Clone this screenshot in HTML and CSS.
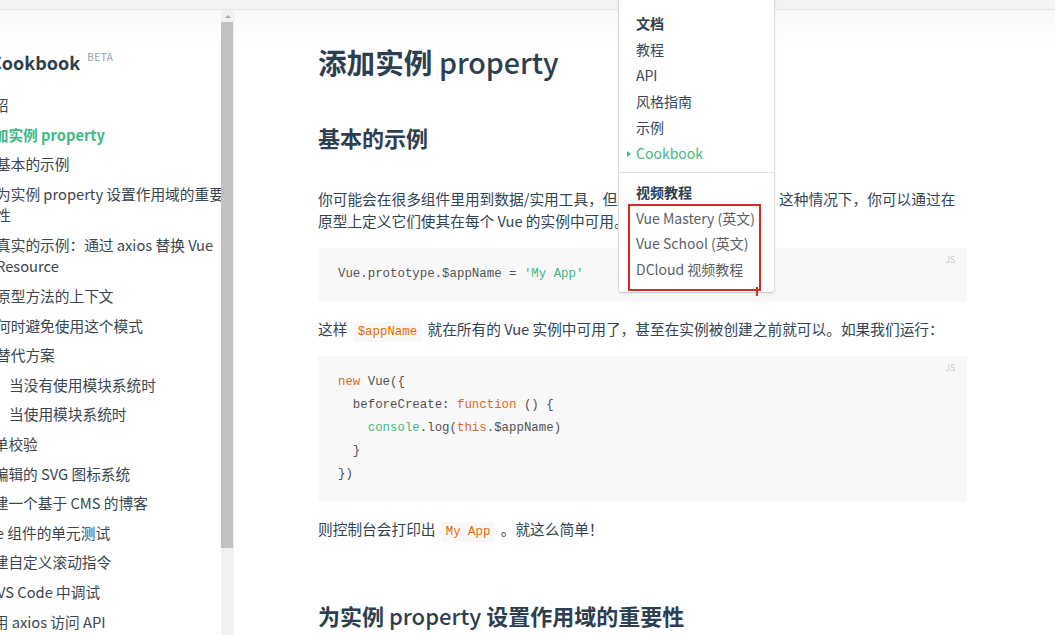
FILE: index.html
```html
<!DOCTYPE html>
<html lang="zh-CN">
<head>
<meta charset="utf-8">
<title>添加实例 property — Vue.js</title>
<link rel="stylesheet" href="styles.css">
</head>
<body>
<div class="topbar"></div>
<div class="layout">
  <aside class="sidebar">
    <div class="sidebar-inner">
      <h2 class="sb-title">Cookbook<sup class="beta">BETA</sup></h2>
      <ul class="menu">
        <li class="l0">介绍</li>
        <li class="l0 current">添加实例 property</li>
        <li class="l1">基本的示例</li>
        <li class="l1">为实例 property 设置作用域的重要性</li>
        <li class="l1">真实的示例：通过 axios 替换 Vue Resource</li>
        <li class="l1">原型方法的上下文</li>
        <li class="l1">何时避免使用这个模式</li>
        <li class="l1">替代方案</li>
        <li class="l2">当没有使用模块系统时</li>
        <li class="l2">当使用模块系统时</li>
        <li class="l0">表单校验</li>
        <li class="l0">可编辑的 SVG 图标系统</li>
        <li class="l0">创建一个基于 CMS 的博客</li>
        <li class="l0">Vue 组件的单元测试</li>
        <li class="l0">创建自定义滚动指令</li>
        <li class="l0">在 VS Code 中调试</li>
        <li class="l0">使用 axios 访问 API</li>
      </ul>
    </div>
  </aside>
  <div class="scrollbar">
    <span class="sb-arrow"></span>
    <span class="sb-thumb"></span>
  </div>
  <main class="main">
    <div class="content">
      <h1 class="title">添加实例 <span class="latin">property</span></h1>
      <h2 class="h2 first">基本的示例</h2>
      <p class="para p1">你可能会在很多组件里用到数据/实用工具，但是不想污染全局作用域。这种情况下，你可以通过在原型上定义它们使其在每个 Vue 的实例中可用。</p>
      <pre class="code c1"><code>Vue.prototype.$appName = <span class="str">'My App'</span></code></pre>
      <p class="para p2">这样 <code class="ic">$appName</code> 就在所有的 Vue 实例中可用了，甚至在实例被创建之前就可以。如果我们运行：</p>
      <pre class="code c2"><code><span class="kw">new</span> Vue({
  beforeCreate: <span class="kw">function</span> () {
    <span class="bi">console</span>.log(<span class="kw">this</span>.$appName)
  }
})</code></pre>
      <p class="para p3">则控制台会打印出 <code class="ic">My App</code> 。就这么简单！</p>
      <h2 class="h2 second">为实例 <span class="latin">property</span> 设置作用域的重要性</h2>
    </div>
  </main>
</div>

<div class="dropdown">
  <ul class="dd-list">
    <li class="dd-head">文档</li>
    <li class="dd-item">教程</li>
    <li class="dd-item">API</li>
    <li class="dd-item">风格指南</li>
    <li class="dd-item">示例</li>
    <li class="dd-item active">Cookbook</li>
  </ul>
  <ul class="dd-list dd-video">
    <li class="dd-head">视频教程</li>
    <li class="dd-item muted">Vue Mastery (英文)</li>
    <li class="dd-item muted">Vue School (英文)</li>
    <li class="dd-item muted">DCloud 视频教程</li>
  </ul>
</div>
<div class="annot-box"></div>
<div class="annot-tick"></div>
</body>
</html>
```

FILE: styles.css
```css
* { box-sizing: border-box; }

html, body {
  margin: 0;
  padding: 0;
}

body {
  width: 1055px;
  height: 635px;
  overflow: hidden;
  position: relative;
  background: #fff;
  color: #304455;
  font-family: "Noto Sans CJK SC", "Noto Sans", sans-serif;
}

.topbar {
  height: 10px;
  background: #f3f3f3;
  border-bottom: 1px solid #e6e6e6;
}

.layout {
  display: flex;
  height: 625px;
}

/* ---------- sidebar ---------- */
.sidebar {
  width: 221px;
  flex: none;
  overflow: hidden;
  background: linear-gradient(#f8f8f8, #fff 36px);
}

.sidebar-inner {
  margin-left: -21px;
  width: 249px;
}

.sb-title {
  margin: 37px 0 0 11px;
  font-size: 18px;
  line-height: 30px;
  font-weight: 600;
  color: #2c3e50;
  white-space: nowrap;
}

.beta {
  display: inline-block;
  vertical-align: top;
  margin-left: 7px;
  font-size: 10px;
  line-height: 20px;
  font-weight: 400;
  letter-spacing: 0.5px;
  color: #9aa0a6;
}

.menu {
  list-style: none;
  margin: 17px 0 0;
  padding: 0;
  font-size: 14.7px;
  line-height: 21.5px;
}

.menu li {
  margin-bottom: 8.1px;
  color: #3a4650;
}

.menu .l1 { padding-left: 17px; }
.menu .l2 { padding-left: 30px; }

.menu .current {
  color: #42b983;
  font-weight: 600;
}

/* ---------- scrollbar ---------- */
.scrollbar {
  width: 13px;
  flex: none;
  background: #f1f1f1;
  display: flex;
  flex-direction: column;
  align-items: flex-start;
}

.sb-arrow {
  margin: 5px 0 0 4px;
  width: 0;
  height: 0;
  border-left: 3px solid transparent;
  border-right: 3px solid transparent;
  border-bottom: 3px solid #a8a8a8;
}

.sb-thumb {
  margin-top: 4px;
  width: 12px;
  height: 526px;
  background: #c1c1c1;
}

/* ---------- main ---------- */
.main {
  flex: 1;
  padding-left: 84px;
  background: linear-gradient(#f8f8f8, #fff 36px);
}

.content {
  width: 649px;
}

.title {
  margin: 32px 0 0;
  font-size: 28.6px;
  line-height: 40px;
  font-weight: 700;
  color: #2c3e50;
}

.latin { font-weight: 500; }

.h2 {
  margin: 0;
  font-size: 22px;
  line-height: 30px;
  font-weight: 700;
  color: #2c3e50;
}

.h2.first { margin-top: 40px; }
.h2.second { margin-top: 60px; }

.para {
  margin: 0;
  font-size: 14.7px;
  line-height: 22px;
  color: #304455;
}

.p1 { margin-top: 36px; }
.p2 { margin-top: 17px; }
.p3 { margin-top: 17px; }

.code {
  position: relative;
  margin: 0;
  padding: 15px 20px;
  background: #f8f8f8;
  font-family: "Liberation Mono", "DejaVu Sans Mono", monospace;
  font-size: 12.4px;
  line-height: 23px;
  color: #525252;
}

.code code {
  font: inherit;
  line-height: inherit;
}

.code::after {
  content: "JS";
  position: absolute;
  top: 5px;
  right: 12px;
  font-family: "Noto Sans CJK SC", sans-serif;
  font-size: 8.5px;
  line-height: 12px;
  color: #c8c8c8;
}

.c1 { margin-top: 16px; }
.c2 { margin-top: 16px; }

.kw { color: #e06a1b; }
.str { color: #42b983; }
.bi { color: #42b983; }

.ic {
  font-family: "Liberation Mono", "DejaVu Sans Mono", monospace;
  font-size: 12.4px;
  line-height: 1;
  color: #e96900;
  background: #f8f8f8;
  padding: 3px 5px;
  margin: 0 2px;
  border-radius: 2px;
}

/* ---------- dropdown menu ---------- */
.dropdown {
  position: absolute;
  left: 618px;
  top: -4px;
  width: 157px;
  height: 297px;
  background: #fff;
  border: 1px solid #dcdcdc;
  border-bottom-color: #ccc;
  border-radius: 4px;
  box-shadow: 0 1px 3px rgba(0, 0, 0, 0.06);
  font-size: 14px;
}

.dd-list {
  list-style: none;
  margin: 0;
  padding: 0 0 0 17px;
  line-height: 26px;
}

.dd-list:first-child { padding-top: 13px; padding-bottom: 6px; }

.dd-video {
  border-top: 1px solid #e2e2e2;
  padding-top: 7px;
  line-height: 25.7px;
}

.dd-head {
  font-weight: 700;
  color: #2c3e50;
}

.dd-item { color: #34495e; }
.dd-item.muted { color: #5a5f66; }

.dd-item.active { color: #42b983; }

.dd-item.active::before {
  content: "";
  display: inline-block;
  vertical-align: middle;
  margin: -2px 5px 0 -9px;
  border-left: 4px solid #42b983;
  border-top: 3px solid transparent;
  border-bottom: 3px solid transparent;
}

/* ---------- red annotation ---------- */
.annot-box {
  position: absolute;
  left: 628px;
  top: 204px;
  width: 133px;
  height: 87px;
  border: 2px solid #d92a2a;
}

.annot-tick {
  position: absolute;
  left: 756px;
  top: 287px;
  width: 2px;
  height: 9px;
  background: #d92a2a;
}
```
